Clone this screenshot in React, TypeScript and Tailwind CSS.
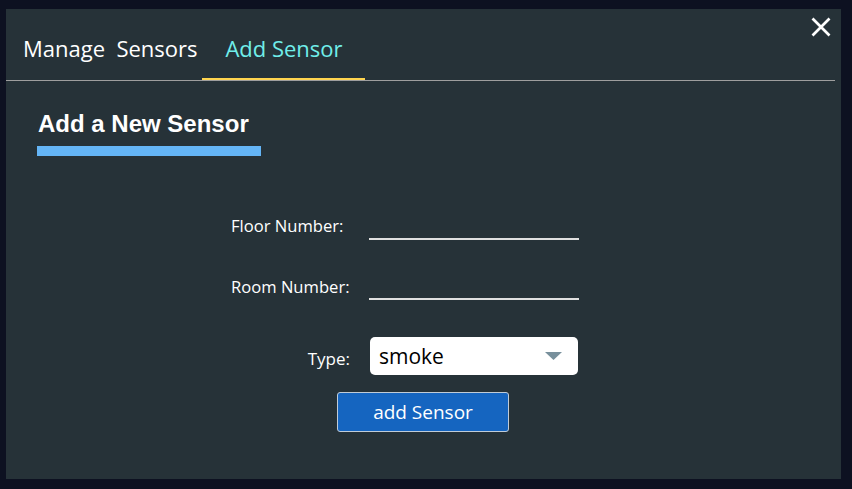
import { useState } from "react";

export default function App() {
  const [floor, setFloor] = useState("");
  const [room, setRoom] = useState("");
  const [type, setType] = useState("smoke");

  return (
    <div className="w-[852px] h-[489px] bg-[#0d1121] pt-[9px] pl-[6px] font-['Open_Sans',sans-serif]">
      <div className="relative w-[835px] h-[470px] bg-[#263238] flex flex-col">
        {/* Close */}
        <button className="absolute top-[8px] right-[10px] w-[20px] h-[20px]">
          <svg width="20" height="20" viewBox="0 0 20 20">
            <path d="M1.5 1.5 L18.5 18.5 M18.5 1.5 L1.5 18.5" stroke="#fff" strokeWidth="2.7" />
          </svg>
        </button>

        {/* Tabs */}
        <div className="flex h-[72px] mr-[6px] border-b border-[#9e9e9e]">
          <div className="w-[196px] pl-[17px] pt-[24px] text-[22px] leading-[30px] text-white whitespace-pre">
            Manage  Sensors
          </div>
          <div className="w-[163px] pt-[24px] pl-px text-center text-[22px] leading-[30px] text-[#70eeea] border-b-2 border-[#ffd54f]">
            Add Sensor
          </div>
        </div>

        {/* Heading */}
        <div className="pl-[31px] mt-[29px]">
          <h2 className="pl-px font-['Liberation_Sans',Arial,sans-serif] font-bold text-[24px] leading-[28px] text-white">
            Add a New Sensor
          </h2>
          <div className="mt-[8px] w-[224px] h-[10px] bg-[#64b5f6]" />
        </div>

        {/* Form */}
        <div className="pl-[225px] mt-[50px] flex flex-col text-white text-[16.6px] leading-[24px]">
          <div className="flex h-[34px]">
            <label className="w-[138px] self-end mb-[2px]">Floor Number:</label>
            <input
              value={floor}
              onChange={(e) => setFloor(e.target.value)}
              className="self-end w-[210px] h-[30px] bg-transparent border-b-2 border-[#e0e0e0] outline-none text-white"
            />
          </div>
          <div className="flex h-[34px] mt-[26px]">
            <label className="w-[138px] self-end mb-[1px]">Room Number:</label>
            <input
              value={room}
              onChange={(e) => setRoom(e.target.value)}
              className="self-end w-[210px] h-[30px] bg-transparent border-b-2 border-[#e0e0e0] outline-none text-white"
            />
          </div>
          <div className="flex items-end mt-[37px]">
            <label className="w-[139px] text-right pr-[20px] mb-[4px] text-[17px]">Type:</label>
            <div className="relative">
              <select
                value={type}
                onChange={(e) => setType(e.target.value)}
                className="appearance-none w-[208px] h-[38px] bg-white rounded-[5px] pl-[9px] text-[21px] text-black outline-none"
              >
                <option value="smoke">smoke</option>
                <option value="heat">heat</option>
                <option value="gas">gas</option>
              </select>
              <svg
                className="absolute left-[175px] top-[15px] pointer-events-none"
                width="17"
                height="8"
                viewBox="0 0 17 8"
              >
                <path d="M0 0 H17 L8.5 8 Z" fill="#78909c" />
              </svg>
            </div>
          </div>
          <button className="mt-[17px] ml-[106px] w-[172px] h-[40px] bg-[#1565c0] border border-[#c0ccd8] rounded-[3px] text-white text-[19px]">
            add Sensor
          </button>
        </div>
      </div>
    </div>
  );
}
